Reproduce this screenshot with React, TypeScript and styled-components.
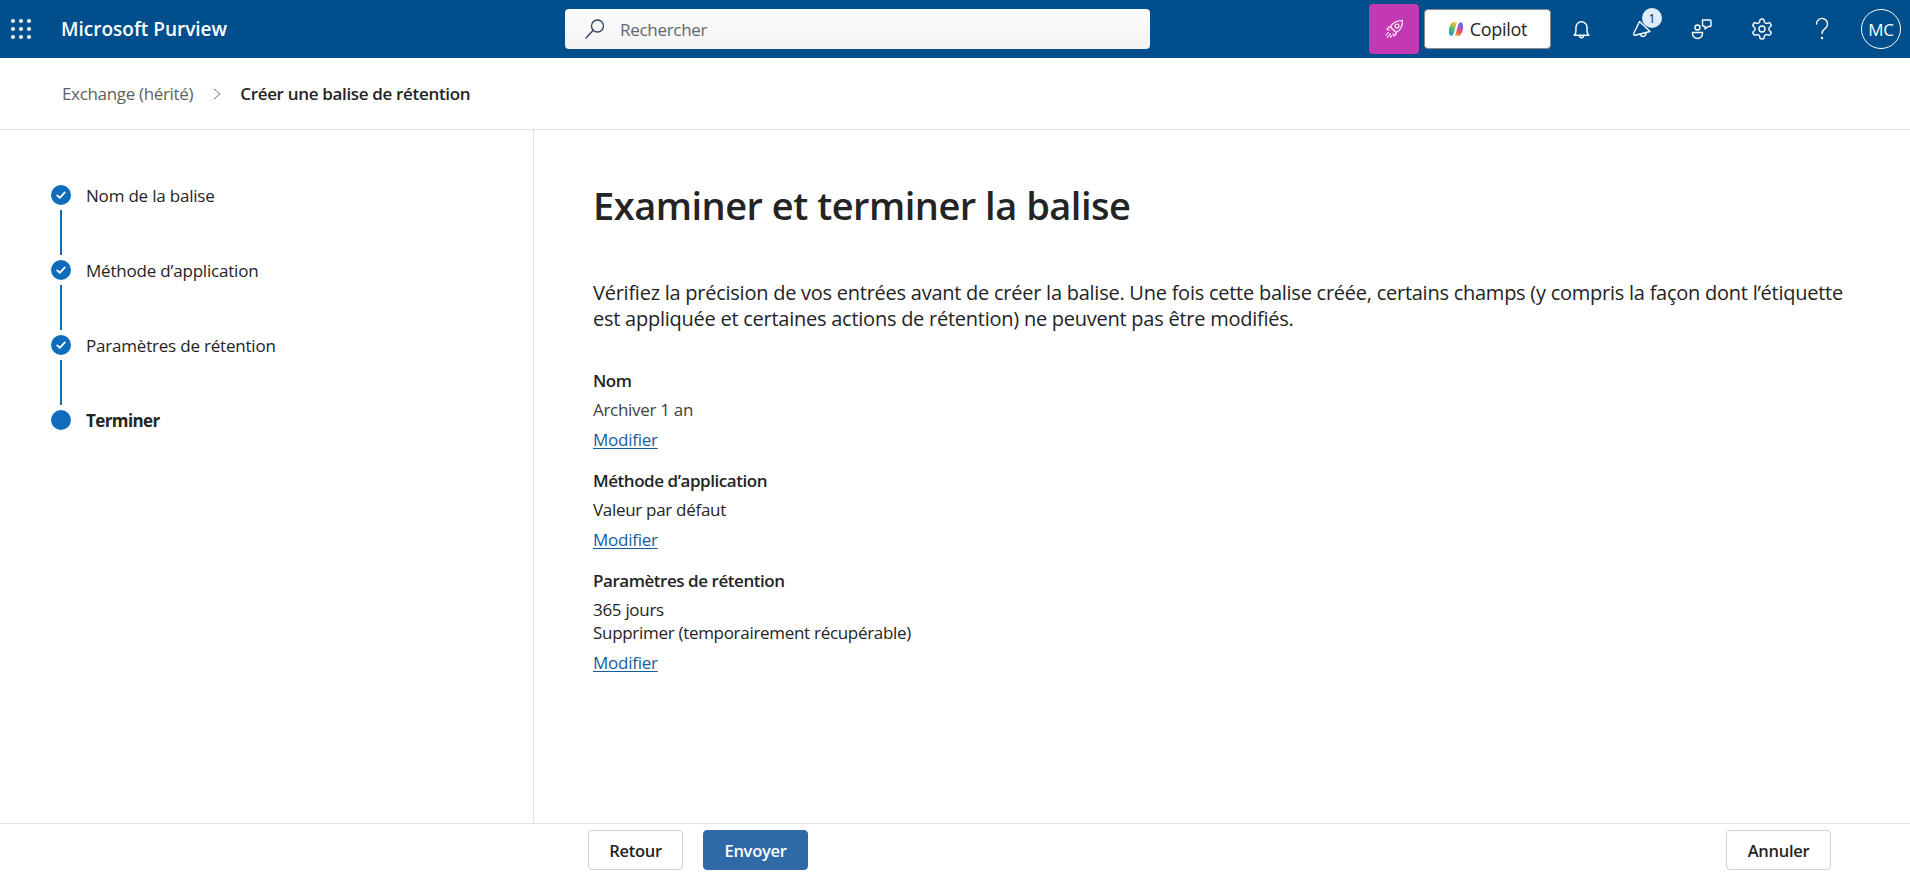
import React from "react";
import styled, { createGlobalStyle } from "styled-components";

const Global = createGlobalStyle`
  html, body { margin: 0; padding: 0; height: 100%; background: #fff; overflow: hidden; }
  body { font-family: "Open Sans", "Noto Sans", sans-serif; color: #242424; }
  #root { height: 100%; }
  * { box-sizing: border-box; }
`;

const Page = styled.div`
  display: flex;
  flex-direction: column;
  height: 875px;
`;

const TopBar = styled.header`
  flex: 0 0 58px;
  display: flex;
  align-items: center;
  background: #004e8c;
  color: #fff;
`;

const Waffle = styled.svg`
  width: 20px;
  height: 20px;
  margin-left: 11px;
  flex: none;
`;

const Brand = styled.div`
  margin-left: 30px;
  width: 504px;
  font-size: 19px;
  font-weight: 600;
  white-space: nowrap;
`;

const SearchBox = styled.div`
  width: 585px;
  height: 40px;
  display: flex;
  align-items: center;
  gap: 14px;
  padding-left: 19px;
  border-radius: 4px;
  background: linear-gradient(#fcfcfc, #f3f3f3);
  color: #5f6670;
  font-size: 17px;
  letter-spacing: -0.3px;
`;

const Actions = styled.div`
  margin-left: 219px;
  display: flex;
  align-items: center;
`;

const RocketTile = styled.div`
  width: 50px;
  height: 50px;
  display: flex;
  align-items: center;
  justify-content: center;
  background: #c239b3;
  border-radius: 4px;
`;

const CopilotButton = styled.div`
  margin-left: 5px;
  width: 127px;
  height: 40px;
  display: flex;
  align-items: center;
  justify-content: center;
  gap: 6px;
  background: #fff;
  border: 1px solid #8a8a8a;
  border-radius: 4px;
  color: #242424;
  font-size: 18px;
  font-weight: 500;
  letter-spacing: -0.3px;
`;

const IconSlot = styled.div<{ $w: number }>`
  position: relative;
  width: ${(p) => p.$w}px;
  height: 48px;
  display: flex;
  align-items: center;
  justify-content: center;
`;

const Badge = styled.span`
  position: absolute;
  top: 3px;
  left: 30px;
  width: 20px;
  height: 20px;
  border-radius: 50%;
  display: flex;
  align-items: center;
  justify-content: center;
  background: #deecf9;
  color: #242424;
  font-size: 12px;
`;

const Avatar = styled.div`
  margin-left: 9px;
  width: 40px;
  height: 40px;
  border: 1px solid #fff;
  border-radius: 50%;
  display: flex;
  align-items: center;
  justify-content: center;
  font-size: 17px;
  letter-spacing: -0.3px;
`;

const Crumbs = styled.nav`
  flex: 0 0 72px;
  display: flex;
  align-items: center;
  padding-left: 62px;
  border-bottom: 1px solid #e1e1e1;
  font-size: 17px;
  letter-spacing: -0.33px;
`;

const CrumbLink = styled.span`
  color: #616161;
`;

const CrumbSeparator = styled.svg`
  width: 12px;
  height: 12px;
  margin: 0 17px 0 18px;
`;

const CrumbCurrent = styled.span`
  font-weight: 600;
  color: #242424;
`;

const Body = styled.div`
  flex: 1;
  min-height: 0;
  display: flex;
`;

const Steps = styled.aside`
  flex: 0 0 534px;
  padding: 55px 0 0 51px;
  border-right: 1px solid #e1e1e1;
`;

const Step = styled.div`
  display: flex;
  align-items: flex-start;
  height: 75px;
`;

const Rail = styled.div`
  width: 20px;
  margin-right: 15px;
  display: flex;
  flex-direction: column;
  align-items: center;
  flex: none;
`;

const Dot = styled.div`
  width: 20px;
  height: 20px;
  border-radius: 50%;
  background: #0f6cbd;
  display: flex;
  align-items: center;
  justify-content: center;
`;

const RailLine = styled.div`
  width: 2px;
  height: 45px;
  margin-top: 5px;
  background: #0f6cbd;
`;

const StepLabel = styled.div<{ $active?: boolean }>`
  padding-top: 1px;
  font-size: 17px;
  line-height: 20px;
  letter-spacing: ${(p) => (p.$active ? "-0.6px" : "-0.2px")};
  font-weight: ${(p) => (p.$active ? 700 : 400)};
  color: #242424;
`;

const Main = styled.main`
  flex: 1;
  padding: 48px 40px 0 59px;
`;

const Title = styled.h1`
  margin: 0;
  font-size: 38px;
  line-height: 54px;
  font-weight: 600;
  letter-spacing: -0.5px;
  color: #242424;
`;

const Intro = styled.p`
  margin: 48px 0 0;
  font-size: 20px;
  line-height: 26px;
  letter-spacing: -0.25px;
  color: #242424;
`;

const Sections = styled.div`
  margin-top: 37px;
  display: flex;
  flex-direction: column;
  gap: 18px;
`;

const Section = styled.section`
  display: flex;
  flex-direction: column;
`;

const SectionTitle = styled.div`
  font-size: 17px;
  line-height: 24px;
  font-weight: 600;
  letter-spacing: -0.45px;
  color: #242424;
  margin-bottom: 5px;
`;

const Value = styled.div<{ $muted?: boolean }>`
  font-size: 17px;
  line-height: 23px;
  letter-spacing: -0.3px;
  color: ${(p) => (p.$muted ? "#424242" : "#242424")};
`;

const EditLink = styled.a`
  margin-top: 7px;
  font-size: 17px;
  line-height: 23px;
  letter-spacing: -0.25px;
  color: #115ea3;
  text-decoration: underline;
  text-underline-offset: 2px;
  align-self: flex-start;
`;

const Footer = styled.footer`
  flex: 0 0 52px;
  display: flex;
  align-items: flex-start;
  gap: 20px;
  padding: 6px 79px 0 588px;
  border-top: 1px solid #e1e1e1;
`;

const Button = styled.button<{ $primary?: boolean; $push?: boolean }>`
  width: ${(p) => (p.$primary ? 105 : 95)}px;
  ${(p) => (p.$push ? "width: 105px; margin-left: auto;" : "")}
  height: 40px;
  border-radius: 4px;
  border: 1px solid ${(p) => (p.$primary ? "#2f6aa8" : "#d1d1d1")};
  background: ${(p) => (p.$primary ? "#2f6aa8" : "#fff")};
  color: ${(p) => (p.$primary ? "#fff" : "#242424")};
  font-family: inherit;
  font-size: 16.5px;
  font-weight: 600;
  letter-spacing: -0.3px;
  padding: 0;
`;

const Check = () => (
  <svg width="12" height="12" viewBox="0 0 12 12" fill="none">
    <path d="M2.2 6.4 4.8 8.9 9.8 3.4" stroke="#fff" strokeWidth="1.8" strokeLinecap="round" strokeLinejoin="round" />
  </svg>
);

const stroke = { fill: "none", stroke: "#fff", strokeWidth: 1.3, strokeLinecap: "round", strokeLinejoin: "round" } as const;

const steps = ["Nom de la balise", "Méthode d’application", "Paramètres de rétention"];

export default function App() {
  return (
    <Page>
      <Global />
      <TopBar>
        <Waffle viewBox="0 0 20 20" fill="#fff">
          {[2, 10, 18].flatMap((y) =>
            [2, 10, 18].map((x) => <circle key={`${x}-${y}`} cx={x} cy={y} r="2" />)
          )}
        </Waffle>
        <Brand>Microsoft Purview</Brand>
        <SearchBox>
          <svg width="22" height="22" viewBox="0 0 22 22" fill="none" stroke="#30445c" strokeWidth="1.3" strokeLinecap="round">
            <circle cx="13.5" cy="8" r="6" />
            <path d="M9.2 12.3 2 20" />
          </svg>
          Rechercher
        </SearchBox>
        <Actions>
          <RocketTile>
            <svg width="22" height="22" viewBox="0 0 22 22" {...stroke} strokeWidth={1.1}>
              <path d="M7.500 9C9.500 4.500 13 2.500 19.500 2.500C19.500 9 17.500 12.500 13 14.500Z" />
              <circle cx="14" cy="8" r="2" />
              <path d="M7.500 9H5.500L4 11.500 6.500 12M13 14.500V16.500L10.500 18 10 15.500" />
              <path d="M5.500 14.500 3 17M7.500 16 3.500 20M8.500 18 6.500 20" strokeDasharray="1.5 1.5" />
            </svg>
          </RocketTile>
          <CopilotButton>
            <svg width="16" height="16" viewBox="0 0 18 18">
              <defs>
                <linearGradient id="cpL" x1="0.6" y1="0" x2="0.2" y2="1">
                  <stop offset="0" stopColor="#f6c32c" />
                  <stop offset="0.45" stopColor="#5cc06a" />
                  <stop offset="1" stopColor="#1b8fe0" />
                </linearGradient>
                <linearGradient id="cpR" x1="0.7" y1="0" x2="0.3" y2="1">
                  <stop offset="0" stopColor="#4a7df0" />
                  <stop offset="0.35" stopColor="#a64fd8" />
                  <stop offset="0.65" stopColor="#ec4f6a" />
                  <stop offset="1" stopColor="#f59a2e" />
                </linearGradient>
              </defs>
              <path d="M5 1.500H10L7 12C6.500 15 5 16.500 3.500 16.500C1.500 16.500 1 14 1 11C1 7 3 3 5 1.500Z" fill="url(#cpL)" />
              <path d="M8 16.500H13C15 15 17 11 17 7C17 4 16.500 1.500 14.500 1.500C13 1.500 11.500 3 11 6Z" fill="url(#cpR)" />
            </svg>
            Copilot
          </CopilotButton>
          <IconSlot $w={61}>
            <svg width="21" height="21" viewBox="0 0 20 20" {...stroke} strokeWidth={1.4}>
              <path d="M3 15.500c1.200-1 1.700-2.300 1.700-4V8a5.300 5.300 0 0 1 10.600 0v3.500c0 1.700.5 3 1.700 4z" />
              <path d="M8 15.800a2 2 0 0 0 4 0" />
            </svg>
          </IconSlot>
          <IconSlot $w={60}>
            <svg width="24" height="24" viewBox="0 0 24 24" {...stroke} strokeWidth={1.4} style={{ marginLeft: 1 }}>
              <path d="M8.500 4.500 2.700 16.500c-.4 1 .5 2 1.500 1.700L19 14.500z" />
              <path d="M9.500 17.500a2.700 2.700 0 0 0 5.200-1.500" />
            </svg>
            <Badge>1</Badge>
          </IconSlot>
          <IconSlot $w={60}>
            <svg width="22" height="22" viewBox="0 0 22 22" {...stroke} strokeWidth={1.4}>
              <circle cx="6.500" cy="9.500" r="2.500" />
              <path d="M1.500 14.500h10v1a5 5 0 0 1-10 0z" />
              <path d="M11.500 2h7.500a1 1 0 0 1 1 1v4.500a1 1 0 0 1-1 1h-2L14 11V8.500h-.5a2 2 0 0 1-2-2z" />
            </svg>
          </IconSlot>
          <IconSlot $w={60}>
            <svg width="24" height="24" viewBox="0 0 24 24" {...stroke} strokeWidth={1.4}>
              <path d="M12.220 2h-.44a2 2 0 0 0-2 2v.18a2 2 0 0 1-1 1.730l-.43.250a2 2 0 0 1-2 0l-.15-.08a2 2 0 0 0-2.730.73l-.220.380a2 2 0 0 0 .730 2.730l.150.100a2 2 0 0 1 1 1.720v.510a2 2 0 0 1-1 1.740l-.150.090a2 2 0 0 0-.730 2.730l.220.380a2 2 0 0 0 2.730.730l.150-.08a2 2 0 0 1 2 0l.430.250a2 2 0 0 1 1 1.730V20a2 2 0 0 0 2 2h.44a2 2 0 0 0 2-2v-.18a2 2 0 0 1 1-1.730l.430-.250a2 2 0 0 1 2 0l.150.080a2 2 0 0 0 2.730-.730l.220-.390a2 2 0 0 0-.730-2.730l-.150-.080a2 2 0 0 1-1-1.740v-.500a2 2 0 0 1 1-1.740l.150-.090a2 2 0 0 0 .730-2.730l-.220-.380a2 2 0 0 0-2.730-.730l-.150.080a2 2 0 0 1-2 0l-.430-.250a2 2 0 0 1-1-1.730V4a2 2 0 0 0-2-2z" />
              <circle cx="12" cy="12" r="3" />
            </svg>
          </IconSlot>
          <IconSlot $w={60}>
            <svg width="16" height="24" viewBox="0 0 16 24" {...stroke} strokeWidth={1.3}>
              <path d="M2.500 7a5.500 5.500 0 1 1 8.500 4.600C9 13 8 14 8 16.500" />
              <circle cx="8" cy="21" r=".6" fill="#fff" />
            </svg>
          </IconSlot>
          <Avatar>MC</Avatar>
        </Actions>
      </TopBar>

      <Crumbs>
        <CrumbLink>Exchange (hérité)</CrumbLink>
        <CrumbSeparator viewBox="0 0 12 12" fill="none" stroke="#707070" strokeWidth="1">
          <path d="M3 1l6 5-6 5" />
        </CrumbSeparator>
        <CrumbCurrent>Créer une balise de rétention</CrumbCurrent>
      </Crumbs>

      <Body>
        <Steps>
          {steps.map((s) => (
            <Step key={s}>
              <Rail>
                <Dot><Check /></Dot>
                <RailLine />
              </Rail>
              <StepLabel>{s}</StepLabel>
            </Step>
          ))}
          <Step>
            <Rail><Dot /></Rail>
            <StepLabel $active>Terminer</StepLabel>
          </Step>
        </Steps>

        <Main>
          <Title>Examiner et terminer la balise</Title>
          <Intro>
            Vérifiez la précision de vos entrées avant de créer la balise. Une fois cette balise créée, certains champs (y compris la façon dont l’étiquette
            <br />
            est appliquée et certaines actions de rétention) ne peuvent pas être modifiés.
          </Intro>
          <Sections>
            <Section>
              <SectionTitle>Nom</SectionTitle>
              <Value $muted>Archiver 1 an</Value>
              <EditLink href="#">Modifier</EditLink>
            </Section>
            <Section>
              <SectionTitle>Méthode d’application</SectionTitle>
              <Value>Valeur par défaut</Value>
              <EditLink href="#">Modifier</EditLink>
            </Section>
            <Section>
              <SectionTitle>Paramètres de rétention</SectionTitle>
              <Value>365 jours</Value>
              <Value>Supprimer (temporairement récupérable)</Value>
              <EditLink href="#">Modifier</EditLink>
            </Section>
          </Sections>
        </Main>
      </Body>

      <Footer>
        <Button>Retour</Button>
        <Button $primary>Envoyer</Button>
        <Button $push>Annuler</Button>
      </Footer>
    </Page>
  );
}
